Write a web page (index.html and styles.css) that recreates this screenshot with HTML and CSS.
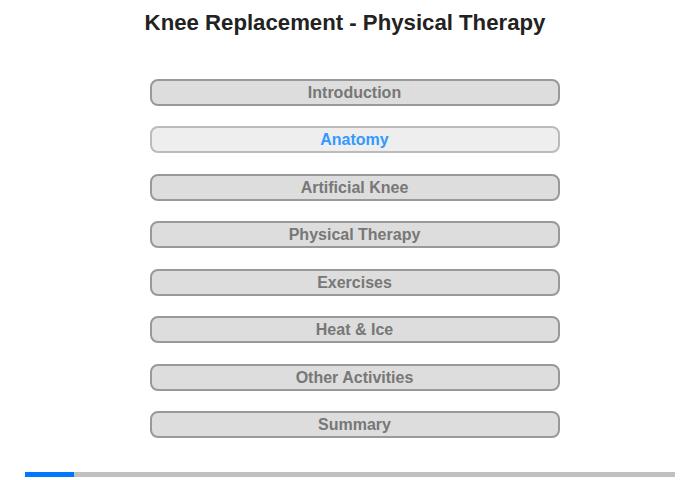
FILE: index.html
```
<!DOCTYPE html>
<html lang="en">

<head>
    <meta charset="UTF-8">
    <meta name="viewport" content="width=device-width, initial-scale=1.0">
    <title>Knee Replacement - Physical Therapy</title>
    <link rel="stylesheet" href="styles.css">
</head>

<body>
    <div id="page">
        <h1 class="title">Knee Replacement - Physical Therapy</h1>

        <ul id="menu">
            <li>Introduction</li>
            <li class="active">Anatomy</li>
            <li>Artificial Knee</li>
            <li>Physical Therapy</li>
            <li>Exercises</li>
            <li>Heat &amp; Ice</li>
            <li>Other Activities</li>
            <li>Summary</li>
        </ul>

        <div class="progress">
            <div class="progress-bar" style="width: 49px;"></div>
        </div>
    </div>
</body>

</html>
```

FILE: styles.css
```
* {
    margin: 0;
    padding: 0;
    box-sizing: border-box;
}

li {
    list-style: none;
}

body {
    font-family: "Liberation Sans", Arial, sans-serif;
    background: #fff;
}

#page {
    width: 700px;
    height: 480px;
    display: flex;
    flex-direction: column;
    align-items: center;
}

.title {
    font-size: 22.2px;
    font-weight: bold;
    color: #222;
    line-height: 26px;
    margin-top: 10px;
    margin-left: -10px;
}

#menu {
    margin-top: 43px;
    margin-left: 9px;
    display: flex;
    flex-direction: column;
    gap: 20.45px;
}

#menu li {
    width: 410px;
    height: 27px;
    background: #dddddd;
    border: 2px solid #999;
    border-radius: 8px;
    color: #777;
    font-size: 16px;
    font-weight: bold;
    text-align: center;
    line-height: 23px;
}

#menu li.active {
    background: #eeeeee;
    border-color: #bbb;
    color: #3399ff;
}

.progress {
    width: 650px;
    height: 5px;
    background: #c0c0c0;
    margin-top: 34px;
}

.progress-bar {
    height: 100%;
    background: #0077ff;
}
```
